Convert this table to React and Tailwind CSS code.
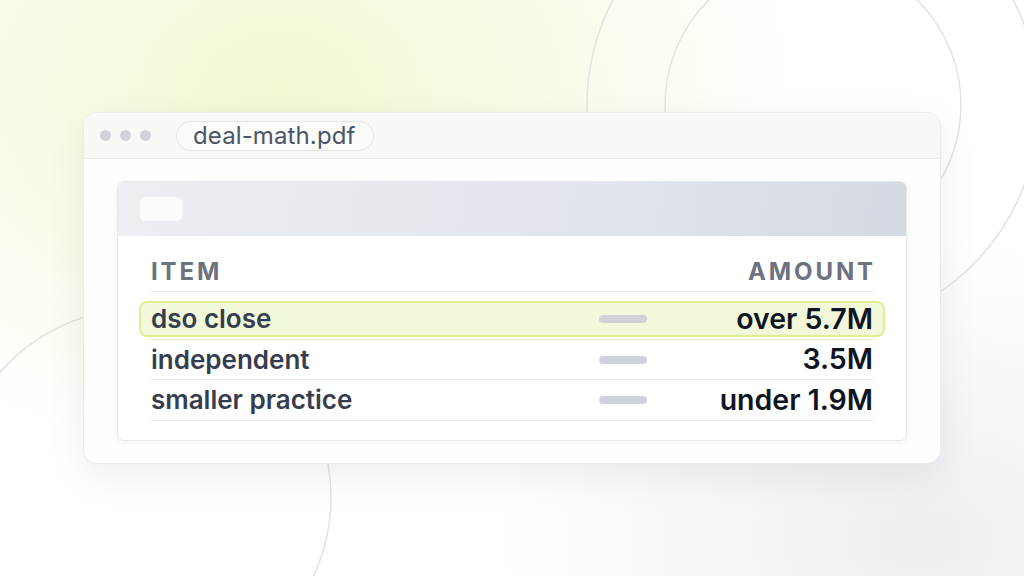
import React from "react";

const rows = [
  { item: "dso close", amount: "over 5.7M", hi: true },
  { item: "independent", amount: "3.5M" },
  { item: "smaller practice", amount: "under 1.9M" },
];

function Row({ item, amount }) {
  return (
    <div className="flex items-center h-full">
      <div className="flex-1 text-[#353d4f] text-[26px]">{item}</div>
      <div className="w-12 h-2 rounded-full bg-[#cfd2da]" />
      <div className="w-[226px] text-right text-[#0f1522] text-[28.5px]">{amount}</div>
    </div>
  );
}

export default function App() {
  return (
    <div
      className="relative w-[1024px] h-[576px] overflow-hidden bg-white bg-[radial-gradient(ellipse_520px_380px_at_280px_90px,#f1f8d2_0%,rgba(244,249,218,0.7)_45%,rgba(255,255,255,0)_100%),radial-gradient(ellipse_420px_300px_at_920px_540px,#eceef2_0%,rgba(236,238,242,0)_100%)]"
      style={{ fontFamily: "Inter, 'Noto Sans', sans-serif" }}
    >
      <svg className="absolute inset-0" width="1024" height="576" fill="none">
        <circle cx="813" cy="105" r="148" stroke="#e3e3e1" strokeWidth="1.5" />
        <circle cx="813" cy="105" r="226" stroke="#e3e3e1" strokeWidth="1.5" />
        <circle cx="142" cy="497" r="189" stroke="#e3e3e1" strokeWidth="1.5" />
      </svg>

      <div className="relative pt-[112px] pl-[83px]">
        <div className="w-[858px] h-[352px] rounded-[14px] border border-[#ebebe8] bg-[#fefefe] shadow-[0_12px_40px_rgba(0,0,0,0.07)] overflow-hidden flex flex-col">
          <div className="h-[46px] shrink-0 bg-[#f8f8f6] border-b border-[#ebebe8] flex items-center pl-[16px]">
            <div className="flex gap-[9px]">
              <div className="w-[11px] h-[11px] rounded-full bg-[#d1d3d9]" />
              <div className="w-[11px] h-[11px] rounded-full bg-[#d1d3d9]" />
              <div className="w-[11px] h-[11px] rounded-full bg-[#d1d3d9]" />
            </div>
            <div className="ml-[25px] h-[30px] pl-[16px] pr-[17px] rounded-full border border-[#e4e4e1] bg-[#fbfbfa] flex items-center text-[24px] tracking-[0.005em] text-[#4b5563] leading-none">
              deal-math.pdf
            </div>
          </div>

          <div className="flex-1 px-[33px] py-[22px]">
            <div className="h-full rounded-[7px] border border-[#e8e8e6] bg-white shadow-[0_2px_8px_rgba(0,0,0,0.05)] overflow-hidden">
              <div className="h-[54px] bg-[linear-gradient(100deg,#eceef2_0%,#e2e6ec_55%,#d5dae2_100%)] flex items-center pl-[22px]">
                <div className="w-[42px] h-[24px] rounded-[5px] bg-[#fbfbfc]" />
              </div>
              <div className="px-[33px] font-semibold leading-none">
                <div className="h-[56px] pt-[16px] border-b border-[#e6e7e9]">
                  <div className="flex items-center h-full text-[#6b7280] tracking-[0.12em] font-bold text-[24px]">
                    <div className="flex-1">ITEM</div>
                    <div className="text-right mr-[-3px]">AMOUNT</div>
                  </div>
                </div>
                <div className="pt-[9px] pb-[2px] border-b border-[#e6e7e9]">
                  <div className="h-[36px] -mx-[12px] px-[10px] rounded-[8px] border-2 border-[#ddf091] bg-[#f2f8da]">
                    <Row item={rows[0].item} amount={rows[0].amount} />
                  </div>
                </div>
                <div className="h-[40px] border-b border-[#e6e7e9]">
                  <Row item={rows[1].item} amount={rows[1].amount} />
                </div>
                <div className="h-[41px] border-b border-[#e6e7e9]">
                  <Row item={rows[2].item} amount={rows[2].amount} />
                </div>
              </div>
            </div>
          </div>
        </div>
      </div>
    </div>
  );
}
